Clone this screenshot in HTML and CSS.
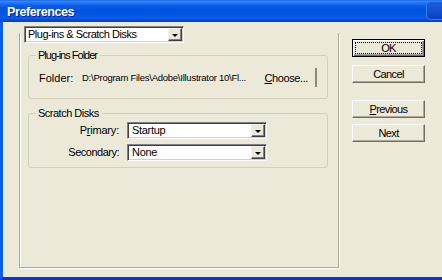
FILE: index.html
```html
<!DOCTYPE html>
<html>
<head>
<meta charset="utf-8">
<title>Preferences</title>
<link rel="stylesheet" href="styles.css">
</head>
<body>
<div class="window">
  <div class="titlebar">
    <span class="title">Preferences</span>
    <span class="tb-btn"></span>
  </div>
  <div class="frame">
    <div class="main">
      <div class="combo top-combo">
        <span class="combo-text">Plug-ins &amp; Scratch Disks</span>
        <span class="arrow"><span class="tri"></span></span>
      </div>
      <div class="panel">
        <fieldset class="group plugins">
          <legend class="legend-plugins">Plug-ins Folder</legend>
          <div class="folder-row">
            <span class="folder-lbl">Folder:</span>
            <span class="path">D:\Program Files\Adobe\Illustrator 10\Fl...</span>
            <span class="choose"><u>C</u>hoose...</span>
          </div>
        </fieldset>
        <fieldset class="group scratch">
          <legend class="legend-scratch">Scratch Disks</legend>
          <div class="field-grid">
            <span class="f-lbl lbl-primary">P<u>r</u>imary:</span>
            <div class="combo field-combo">
              <span class="combo-text">Startup</span>
              <span class="arrow"><span class="tri"></span></span>
            </div>
            <span class="f-lbl lbl-secondary">Secondary:</span>
            <div class="combo field-combo">
              <span class="combo-text">None</span>
              <span class="arrow"><span class="tri"></span></span>
            </div>
          </div>
        </fieldset>
      </div>
    </div>
    <div class="buttons">
      <button class="btn btn-default"><span class="focus">OK</span></button>
      <button class="btn btn-cancel">Cancel</button>
      <button class="btn btn-prev"><u>P</u>revious</button>
      <button class="btn btn-next">Next</button>
    </div>
  </div>
</div>
</body>
</html>
```

FILE: styles.css
```css
* { box-sizing: border-box; }
html, body { margin: 0; padding: 0; }
body {
  width: 442px;
  height: 280px;
  overflow: hidden;
  background: #ECE9D8;
  font-family: "Liberation Sans", Arial, sans-serif;
  font-size: 11px;
  color: #000;
}
.window {
  width: 442px;
  height: 280px;
  display: flex;
  flex-direction: column;
}
.titlebar {
  position: relative;
  height: 22px;
  flex: none;
  display: flex;
  align-items: center;
  padding-left: 7px;
  background: linear-gradient(to bottom,
    #0A5AE6 0px, #3B8CF6 1px, #2472F2 3px, #0A5EEA 6px,
    #0051DE 10px, #0054E3 14px, #0A5EEA 18px, #0549D6 20px, #0340CC 22px);
  overflow: hidden;
}
.title {
  color: #fff;
  font-weight: bold;
  font-size: 12.5px;
  letter-spacing: -0.4px;
  text-shadow: 1px 1px 0 #0A2299;
  margin-top: 1px;
}
.tb-btn {
  position: absolute;
  right: -14px;
  top: 1px;
  width: 30px;
  height: 19px;
  border-radius: 5px;
  background: linear-gradient(to bottom, #1C5FE0, #0B3FC4);
  border: 1px solid #3A7BF0;
}
.frame {
  flex: 1;
  display: flex;
  border-left: 3px solid #0A5BEE;
  border-bottom: 3px solid #0637CF;
  background: #ECE9D8;
}
.main {
  width: 320px;
  margin-left: 16px;
  display: flex;
  flex-direction: column;
}

/* combo boxes */
.combo {
  position: relative;
  z-index: 1;
  display: flex;
  align-items: center;
  background: #fff;
  border: 1px solid;
  border-color: #808080 #fff #fff #808080;
  box-shadow: inset 1px 1px 0 #404040, inset -1px -1px 0 #D4D0C8;
  padding: 1px 1px 1px 1px;
}
.combo-text {
  flex: 1;
  padding-left: 3px;
  white-space: nowrap;
  overflow: hidden;
  line-height: 13px;
}
.arrow {
  width: 14px;
  height: 13px;
  display: flex;
  align-items: center;
  justify-content: center;
  background: #ECE9D8;
  border: 1px solid;
  border-color: #F4F2E8 #404040 #404040 #F4F2E8;
  box-shadow: inset -1px -1px 0 #808080;
}
.tri {
  width: 0;
  height: 0;
  border-left: 3px solid transparent;
  border-right: 3px solid transparent;
  border-top: 3px solid #000;
  margin-top: 1px;
}
.top-combo {
  width: 160px;
  height: 17px;
  margin-top: 4px;
  margin-left: 5px;
}
.top-combo .combo-text {
  padding-left: 2px;
  letter-spacing: -0.5px;
}

/* big panel */
.panel {
  margin-top: -10px;
  height: 235px;
  border: 1px solid #ACA899;
  border-top: none;
  box-shadow: 1px 1px 0 #fff, inset 1px 0 0 #fff;
  padding-left: 8px;
  display: flex;
  flex-direction: column;
}

/* group boxes */
.group {
  width: 300px;
  margin: 0;
  padding: 0;
  border: 1px solid #D0D0BF;
  border-radius: 3px;
  min-width: 0;
}
.group legend {
  padding: 0 3px 0 2px;
  margin-left: 7px;
  line-height: 13px;
  letter-spacing: -0.5px;
}
.legend-plugins { letter-spacing: -1px !important; }
.plugins { margin-top: 16px; }
.scratch { margin-top: 8px; }

.folder-row {
  display: flex;
  align-items: center;
  height: 19px;
  margin: 6px 0 11px;
  padding-left: 10px;
}
.folder-lbl { width: 43px; }
.path {
  font-size: 9.5px;
  letter-spacing: -0.25px;
  white-space: nowrap;
}
.choose {
  margin-left: auto;
  margin-right: 10px;
  height: 19px;
  display: flex;
  align-items: center;
  padding: 0 7px 0 6px;
  border-right: 2px solid #8C8A80;
  letter-spacing: -0.4px;
}

.field-grid {
  display: grid;
  grid-template-columns: 90px 140px;
  column-gap: 8px;
  row-gap: 5px;
  align-items: center;
  margin: 2px 0 6px;
}
.f-lbl {
  text-align: right;
  line-height: 13px;
}
.lbl-primary { letter-spacing: -0.2px; }
.lbl-secondary { letter-spacing: -0.5px; }
.field-combo { height: 17px; }
.field-combo .combo-text { letter-spacing: -0.3px; }

/* buttons */
.buttons {
  margin-left: 13px;
  padding-top: 17px;
  display: flex;
  flex-direction: column;
  width: 73px;
}
.btn {
  width: 73px;
  height: 18px;
  padding: 0;
  margin: 0;
  font-family: "Liberation Sans", Arial, sans-serif;
  font-size: 11px;
  letter-spacing: -0.6px;
  color: #000;
  background: #ECE9D8;
  border: 1px solid;
  border-color: #fff #716F64 #716F64 #fff;
  box-shadow: inset -1px -1px 0 #ACA899;
  display: flex;
  align-items: center;
  justify-content: center;
}
.btn-default {
  border: 1px solid #000;
  box-shadow: inset 1px 1px 0 #fff, inset -1px -1px 0 #716F64, inset -2px -2px 0 #ACA899;
  padding: 2px;
}
.focus {
  flex: 1;
  align-self: stretch;
  display: flex;
  align-items: center;
  justify-content: center;
  border: 1px dotted #000;
}
.btn-cancel { margin-top: 8px; }
.btn-prev { margin-top: 17px; }
.btn-next { margin-top: 6px; }
```
